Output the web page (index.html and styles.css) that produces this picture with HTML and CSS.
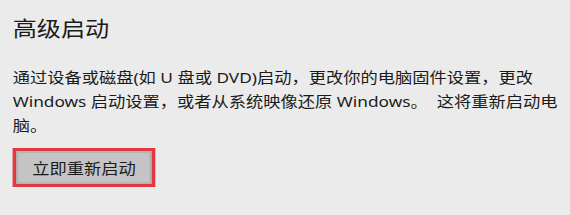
FILE: index.html
```html
<!DOCTYPE html>
<html lang="zh-CN">
<head>
    <meta charset="UTF-8">
    <title>高级启动</title>
    <link rel="stylesheet" href="styles.css">
</head>
<body>
    <div class="section">
        <h1 class="title">高级启动</h1>
        <p class="desc">通过设备或磁盘(如 U 盘或 DVD)启动，更改你的电脑固件设置，更改 Windows 启动设置，或者从系统映像还原 Windows。&nbsp; 这将重新启动电脑。</p>
        <button class="restart">立即重新启动</button>
    </div>
</body>
</html>
```

FILE: styles.css
```css
body {
    margin: 0;
    overflow: hidden;
    background: #ebebeb;
    font-family: "Noto Sans", "Noto Sans CJK SC", sans-serif;
    color: #1b1b1b;
}
/* the reference is a bit wide, so stretch the whole block */
.section {
    padding: 12px 11px;
    width: 480px;
    transform: scaleX(1.15);
    transform-origin: left top;
}
.title {
    font-size: 21px;
    font-weight: normal;
    margin: 0 0 21px 0;
    line-height: 32px;
}
.desc {
    font-size: 15px;
    line-height: 24px;
    margin: 0 0 11px 0;
}
.restart {
    font-family: inherit;
    font-size: 15px;
    color: #1b1b1b;
    background: #c4c4c4;
    border: 3px solid #e2393f;
    box-shadow: inset 0 0 0 2px #b4b4b4;
    width: 124px;
    height: 39px;
    padding: 0;
    cursor: pointer;
}
```
